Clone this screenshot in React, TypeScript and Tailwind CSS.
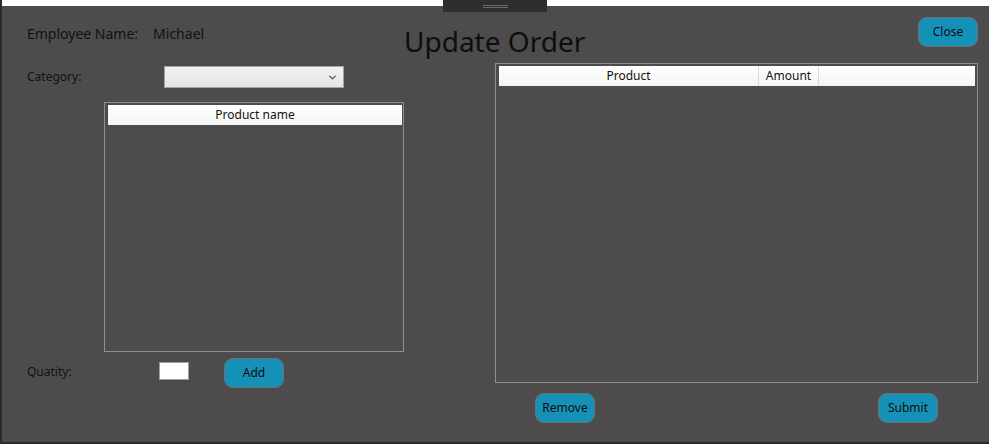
import { ChevronDown } from 'lucide-react'

const font = { fontFamily: '"Noto Sans", "Open Sans", sans-serif' }

function PillButton({ label, className = '' }: { label: string; className?: string }) {
  return (
    <button
      className={`h-[30px] w-[60px] rounded-[9px] border border-[#6a7378] bg-[#1591b8] text-[12px] text-[#0d0d0d] ${className}`}
    >
      {label}
    </button>
  )
}

function HeaderCell({ label, className = '' }: { label: string; className?: string }) {
  return (
    <div
      className={`flex h-full items-center justify-center border-r border-[#d9d9d9] text-[12px] text-[#111] ${className}`}
    >
      {label}
    </div>
  )
}

export default function App() {
  return (
    <div
      className="flex h-[444px] w-[989px] flex-col overflow-hidden border-b-2 border-l-2 border-[#2a2a2a] bg-[#4d4b4c]"
      style={font}
    >
      {/* top strip with drag handle */}
      <div className="relative h-[6px] shrink-0 bg-white">
        <div className="absolute left-[441px] top-0 flex h-[12px] w-[104px] flex-col items-center justify-center gap-[1px] bg-[#2e2e30]">
          <div className="h-px w-[25px] bg-[#6b6b6b]" />
          <div className="h-px w-[25px] bg-[#6b6b6b]" />
        </div>
      </div>

      {/* header */}
      <div className="flex h-[57px] shrink-0">
        <div className="ml-[25px] mt-[16px] flex h-[22px] w-[377px] items-center text-[14px] text-[#121212]">
          <span>Employee Name:</span>
          <span className="ml-[15px]">Michael</span>
        </div>
        <div className="mt-[17px] text-[28px] leading-[36px] text-[#0e0e0e]">Update Order</div>
        <div className="flex-1" />
        <PillButton label="Close" className="mr-[11px] mt-[11px]" />
      </div>

      {/* body */}
      <div className="flex flex-1">
        {/* left column */}
        <div className="ml-[25px] flex w-[376px] flex-col">
          <div className="mt-[3px] flex h-[22px] items-center">
            <span className="w-[137px] text-[12px] text-[#121212]">Category:</span>
            <div className="flex h-[22px] w-[180px] items-center justify-end border border-[#a3a3a3] bg-gradient-to-b from-[#f2f2f2] to-[#e4e4e4] pr-[5px]">
              <ChevronDown size={11} strokeWidth={3} className="text-[#555]" />
            </div>
          </div>

          <div className="ml-[77px] mt-[14px] flex h-[250px] w-[300px] flex-col border border-[#8c8e97] py-[2px] pl-[3px] pr-[1px]">
            <div className="flex h-[20px] items-center justify-center bg-gradient-to-b from-white to-[#f3f5f5] text-[12px] text-[#111]">
              Product name
            </div>
          </div>

          <div className="mt-[6px] flex items-start">
            <span className="mt-[5px] w-[132px] text-[12px] text-[#121212]">Quatity:</span>
            <div className="mt-[4px] h-[18px] w-[30px] border border-[#a0a0a0] bg-white" />
            <PillButton label="Add" className="ml-[35px]" />
          </div>
        </div>

        {/* right column */}
        <div className="ml-[92px] flex w-[483px] flex-col">
          <div className="flex h-[320px] flex-col border border-[#8c8e97] p-[2px] pl-[3px]">
            <div className="flex h-[20px] bg-gradient-to-b from-white to-[#f3f5f5]">
              <HeaderCell label="Product" className="w-[260px]" />
              <HeaderCell label="Amount" className="w-[60px]" />
            </div>
          </div>
          <div className="mt-[10px] flex">
            <PillButton label="Remove" className="ml-[40px]" />
            <div className="flex-1" />
            <PillButton label="Submit" className="mr-[40px]" />
          </div>
        </div>
      </div>
    </div>
  )
}
